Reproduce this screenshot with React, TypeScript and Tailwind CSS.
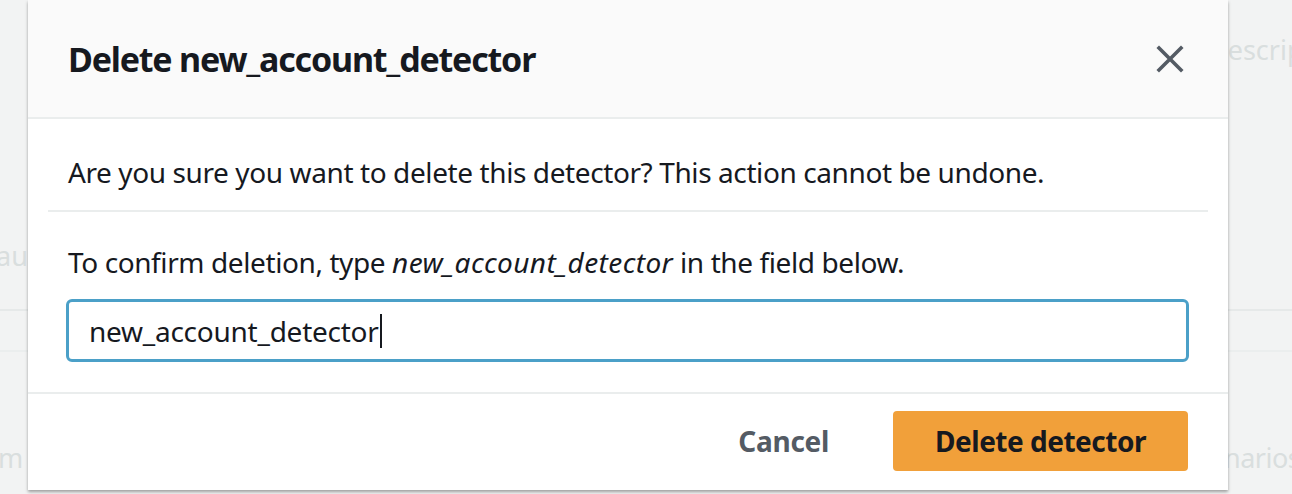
// Delete confirmation modal (AWS console style) over a faded detector list.
const font = { fontFamily: '"Noto Sans", "Open Sans", Arial, sans-serif' };

function CloseIcon() {
  return (
    <svg width="28" height="28" viewBox="0 0 28 28" fill="none" stroke="#545b64" strokeWidth="3.6" strokeLinecap="square">
      <path d="M3 3 L25 25 M25 3 L3 25" />
    </svg>
  );
}

function Background() {
  return (
    <div className="flex h-full w-full flex-col overflow-hidden text-[27px] text-[#d9dede]">
      <div className="flex h-[311px] justify-between border-b-2 border-[#e6e9e9]">
        <div className="ml-[-4px] mt-[236px] whitespace-nowrap leading-[40px]">auc</div>
        <div className="mt-[30px] w-[84px] overflow-hidden whitespace-nowrap leading-[40px]">Description</div>
      </div>
      <div className="h-[41px] border-b-2 border-[#ebeeee]" />
      <div className="flex justify-between">
        <div className="ml-[-2px] mt-[86px] whitespace-nowrap leading-[40px]">m</div>
        <div className="mt-[86px] w-[68px] whitespace-nowrap leading-[40px] tracking-[-0.5px]">narios</div>
      </div>
    </div>
  );
}

function Modal() {
  return (
    <div className="absolute left-[28px] top-0 flex h-[490px] w-[1200px] flex-col bg-white text-[#16191f] shadow-[0_2px_3px_rgba(0,0,0,0.35)]">
      <div className="flex h-[119px] items-center justify-between border-b-2 border-[#eaeded] bg-[#fafafa] pl-[40px] pr-[44px]">
        <h1 className="text-[34px] font-bold leading-[44px] tracking-[-1.2px]">Delete new_account_detector</h1>
        <CloseIcon />
      </div>
      <div className="px-[20px]">
        <div className="border-b-2 border-[#eaeded] px-[20px] pb-[18px] pt-[33px] text-[28px] leading-[40px] tracking-[-0.4px]">
          Are you sure you want to delete this detector? This action cannot be undone.
        </div>
        <div className="px-[20px] pb-[30px] pt-[30px]">
          <p className="text-[28px] leading-[40px] tracking-[-0.4px]">
            To confirm deletion, type <em className="tracking-[0.4px]">new_account_detector</em> in the field below.
          </p>
          <div className="mt-[17px] ml-[-2px] mr-[-1px] flex h-[63px] items-center rounded-[6px] border-[3px] border-[#4ba0c8] pl-[20px] text-[28px] tracking-[-0.25px]">
            <span>new_account_detector</span>
            <span className="ml-[1px] h-[34px] w-[2px] bg-[#16191f]" />
          </div>
        </div>
      </div>
      <div className="flex flex-1 items-start justify-end border-t-2 border-[#eaeded] pr-[40px] pt-[17px]">
        <button className="mr-[64px] mt-[12px] text-[28px] font-bold leading-[36px] tracking-[-0.3px] text-[#545b64]">Cancel</button>
        <button className="flex h-[60px] w-[295px] items-center justify-center rounded-[4px] bg-[#f1a03a] text-[28px] font-bold tracking-[-0.5px] text-[#16191f]">
          Delete detector
        </button>
      </div>
    </div>
  );
}

export default function App() {
  return (
    <div className="relative h-[494px] w-[1292px] overflow-hidden bg-[#f2f3f3]" style={font}>
      <Background />
      <Modal />
    </div>
  );
}
